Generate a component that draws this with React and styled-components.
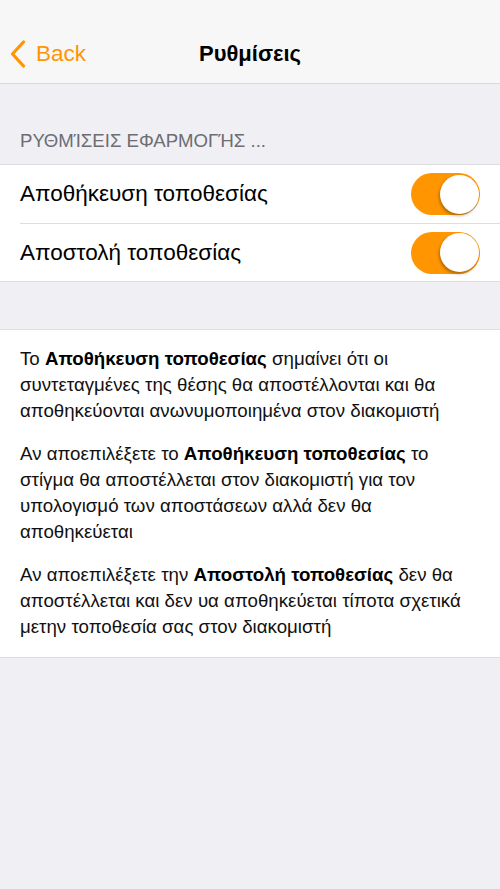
import React from "react";
import styled, { createGlobalStyle } from "styled-components";

const Global = createGlobalStyle`
  html, body { margin: 0; padding: 0; background: #efeff4; }
  body { font-family: "Liberation Sans", Arial, sans-serif; -webkit-font-smoothing: antialiased; }
  * { box-sizing: border-box; }
`;

const Page = styled.div`
  min-height: 100vh;
  background: #efeff4;
  display: flex;
  flex-direction: column;
`;

const NavBar = styled.header`
  background: #f7f7f7;
  border-bottom: 1px solid #d9d9d9;
  height: 84px;
  padding-top: 32px;
  padding-bottom: 7px;
`;

const NavInner = styled.div`
  height: 44px;
  display: grid;
  grid-template-columns: 1fr auto 1fr;
  align-items: center;
`;

const BackButton = styled.button`
  justify-self: start;
  display: flex;
  align-items: center;
  gap: 10px;
  border: 0;
  background: none;
  padding: 0 0 0 10px;
  color: #ff9500;
  font-family: inherit;
  font-size: 22.5px;
  cursor: pointer;
`;

const Title = styled.h1`
  margin: 0;
  font-size: 22px;
  font-weight: 700;
  color: #000;
`;

const SectionHeader = styled.div`
  height: 80px;
  display: flex;
  align-items: flex-end;
  padding: 0 20px 12px;
  font-size: 18.6px;
  color: #6d6d72;
  text-transform: uppercase;
`;

const Group = styled.section`
  background: #fff;
  border-top: 1px solid #dedee2;
  border-bottom: 1px solid #dedee2;
`;

const Row = styled.div`
  height: 58px;
  margin-left: 20px;
  padding-right: 20px;
  display: flex;
  align-items: center;
  justify-content: space-between;
  border-top: ${(p) => (p.$first ? "none" : "1px solid #dedee2")};
`;

const RowLabel = styled.span`
  font-size: 22.5px;
  color: #000;
`;

const Switch = styled.span`
  width: 69px;
  height: 42px;
  border-radius: 21px;
  background: ${(p) => (p.$on ? "#ff9500" : "#e5e5ea")};
  display: flex;
  align-items: center;
  justify-content: ${(p) => (p.$on ? "flex-end" : "flex-start")};
  padding: 0 1px;
`;

const Knob = styled.span`
  width: 39px;
  height: 39px;
  border-radius: 50%;
  background: #fff;
  box-shadow: -1px 2px 3px rgba(0, 0, 0, 0.3);
`;

const Spacer = styled.div`
  height: 47px;
`;

const InfoBox = styled.section`
  background: #fff;
  border-top: 1px solid #dedee2;
  border-bottom: 1px solid #dedee2;
  padding: 16px 20px 17px;
  font-size: 18.7px;
  line-height: 26px;
  color: #111;
`;

const Para = styled.p`
  margin: 0 0 17px;
  &:last-child { margin-bottom: 0; }
  b { font-weight: 700; color: #000; }
`;

const Chevron = () => (
  <svg width="16" height="28" viewBox="0 0 16 28" fill="none">
    <path d="M13.5 2 L2.5 14 L13.5 26" stroke="#ff9500" strokeWidth="3.2" strokeLinecap="round" strokeLinejoin="round" />
  </svg>
);

const Toggle = ({ on }) => (
  <Switch $on={on}>
    <Knob />
  </Switch>
);

export default function App() {
  return (
    <>
      <Global />
      <Page>
        <NavBar>
          <NavInner>
            <BackButton>
              <Chevron />
              Back
            </BackButton>
            <Title>Ρυθμίσεις</Title>
            <span />
          </NavInner>
        </NavBar>
        <SectionHeader>Ρυθμίσεις εφαρμογής ...</SectionHeader>
        <Group>
          <Row $first>
            <RowLabel>Αποθήκευση τοποθεσίας</RowLabel>
            <Toggle on />
          </Row>
          <Row>
            <RowLabel>Αποστολή τοποθεσίας</RowLabel>
            <Toggle on />
          </Row>
        </Group>
        <Spacer />
        <InfoBox>
          <Para>
            Το <b>Αποθήκευση τοποθεσίας</b> σημαίνει ότι οι συντεταγμένες της θέσης θα αποστέλλονται και θα αποθηκεύονται ανωνυμοποιημένα στον διακομιστή
          </Para>
          <Para>
            Αν αποεπιλέξετε το <b>Αποθήκευση τοποθεσίας</b> το στίγμα θα αποστέλλεται στον διακομιστή για τον υπολογισμό των αποστάσεων αλλά δεν θα αποθηκεύεται
          </Para>
          <Para>
            Αν αποεπιλέξετε την <b>Αποστολή τοποθεσίας</b> δεν θα αποστέλλεται και δεν υα αποθηκεύεται τίποτα σχετικά μετην τοποθεσία σας στον διακομιστή
          </Para>
        </InfoBox>
      </Page>
    </>
  );
}
